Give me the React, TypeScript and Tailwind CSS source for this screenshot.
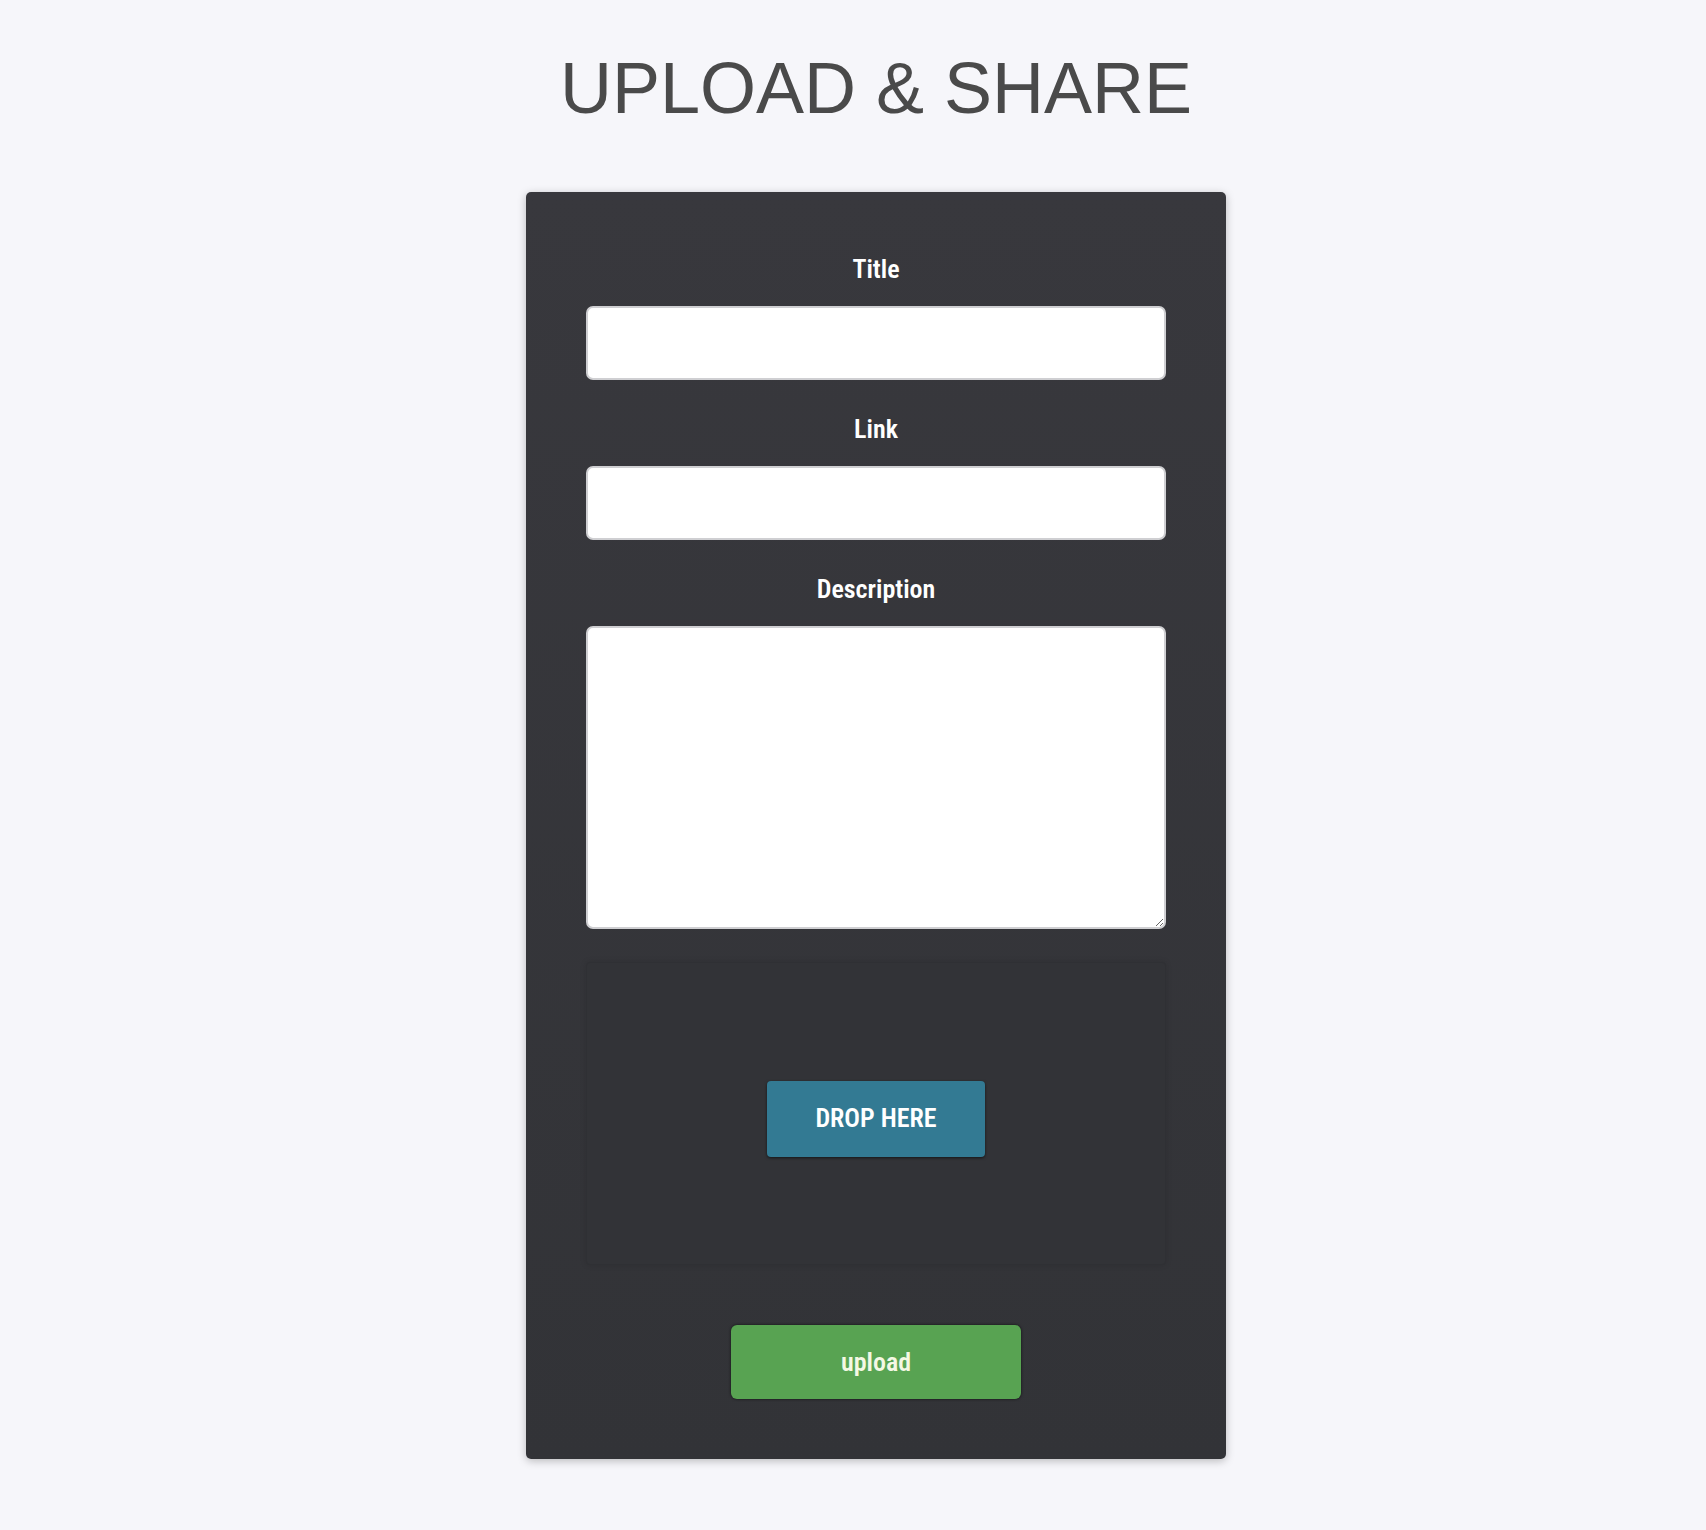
import { useState } from "react";

const LABEL_FONT = "font-['Roboto_Condensed',Roboto,'Liberation_Sans',sans-serif] font-stretch-[75%] font-semibold";

function Field({ label, children }: { label: string; children: React.ReactNode }) {
    return (
        <div className="flex flex-col">
            <label className={`text-center text-[26px] leading-[36px] text-white mb-[19px] ${LABEL_FONT}`}>
                {label}
            </label>
            {children}
        </div>
    );
}

export default function App() {
    const [title, setTitle] = useState("");
    const [link, setLink] = useState("");
    const [desc, setDesc] = useState("");

    return (
        <div className="min-h-[1530px] bg-[#f6f6fa] pl-[46px] pt-[52px] pb-[70px] font-['Liberation_Sans',Arial,sans-serif]">
            {/* Heading */}
            <h1 className="text-center text-[72px] leading-none text-[#4a4a4a]">UPLOAD &amp; SHARE</h1>

            {/* Card */}
            <div className="mx-auto mt-[68px] w-[700px] rounded-[5px] bg-gradient-to-b from-[#38383d] to-[#323337] px-[60px] pt-[59px] pb-[60px] shadow-[0_2px_8px_rgba(0,0,0,0.25)]">
                <div className="flex flex-col gap-[31px]">
                    <Field label="Title">
                        <input
                            value={title}
                            onChange={(e) => setTitle(e.target.value)}
                            className="h-[74px] w-full rounded-[7px] border-2 border-[#cfcfd2] bg-white px-4 text-lg outline-none"
                        />
                    </Field>
                    <Field label="Link">
                        <input
                            value={link}
                            onChange={(e) => setLink(e.target.value)}
                            className="h-[74px] w-full rounded-[7px] border-2 border-[#cfcfd2] bg-white px-4 text-lg outline-none"
                        />
                    </Field>
                    <Field label="Description">
                        <textarea
                            value={desc}
                            onChange={(e) => setDesc(e.target.value)}
                            className="h-[303px] w-full rounded-[7px] border-2 border-[#cfcfd2] bg-white p-3 text-lg outline-none"
                        />
                    </Field>
                </div>

                {/* Drop zone */}
                <div className="mt-[33px] flex h-[303px] items-center justify-center rounded-[4px] border border-[#2f3034] bg-[#323337] shadow-[0_0_6px_rgba(0,0,0,0.12)]">
                    <button
                        className={`mt-[10px] h-[76px] w-[218px] rounded-[4px] bg-[#337a93] text-[26px] text-white shadow-[0_1px_3px_rgba(0,0,0,0.6)] ${LABEL_FONT}`}
                    >
                        DROP HERE
                    </button>
                </div>

                {/* Upload */}
                <div className="mt-[60px] flex justify-center">
                    <button
                        className={`h-[74px] w-[290px] rounded-[6px] bg-[#58a352] text-[26px] text-[#f4f8e4] shadow-[0_0_3px_rgba(0,0,0,0.7)] ${LABEL_FONT}`}
                    >
                        upload
                    </button>
                </div>
            </div>
        </div>
    );
}
